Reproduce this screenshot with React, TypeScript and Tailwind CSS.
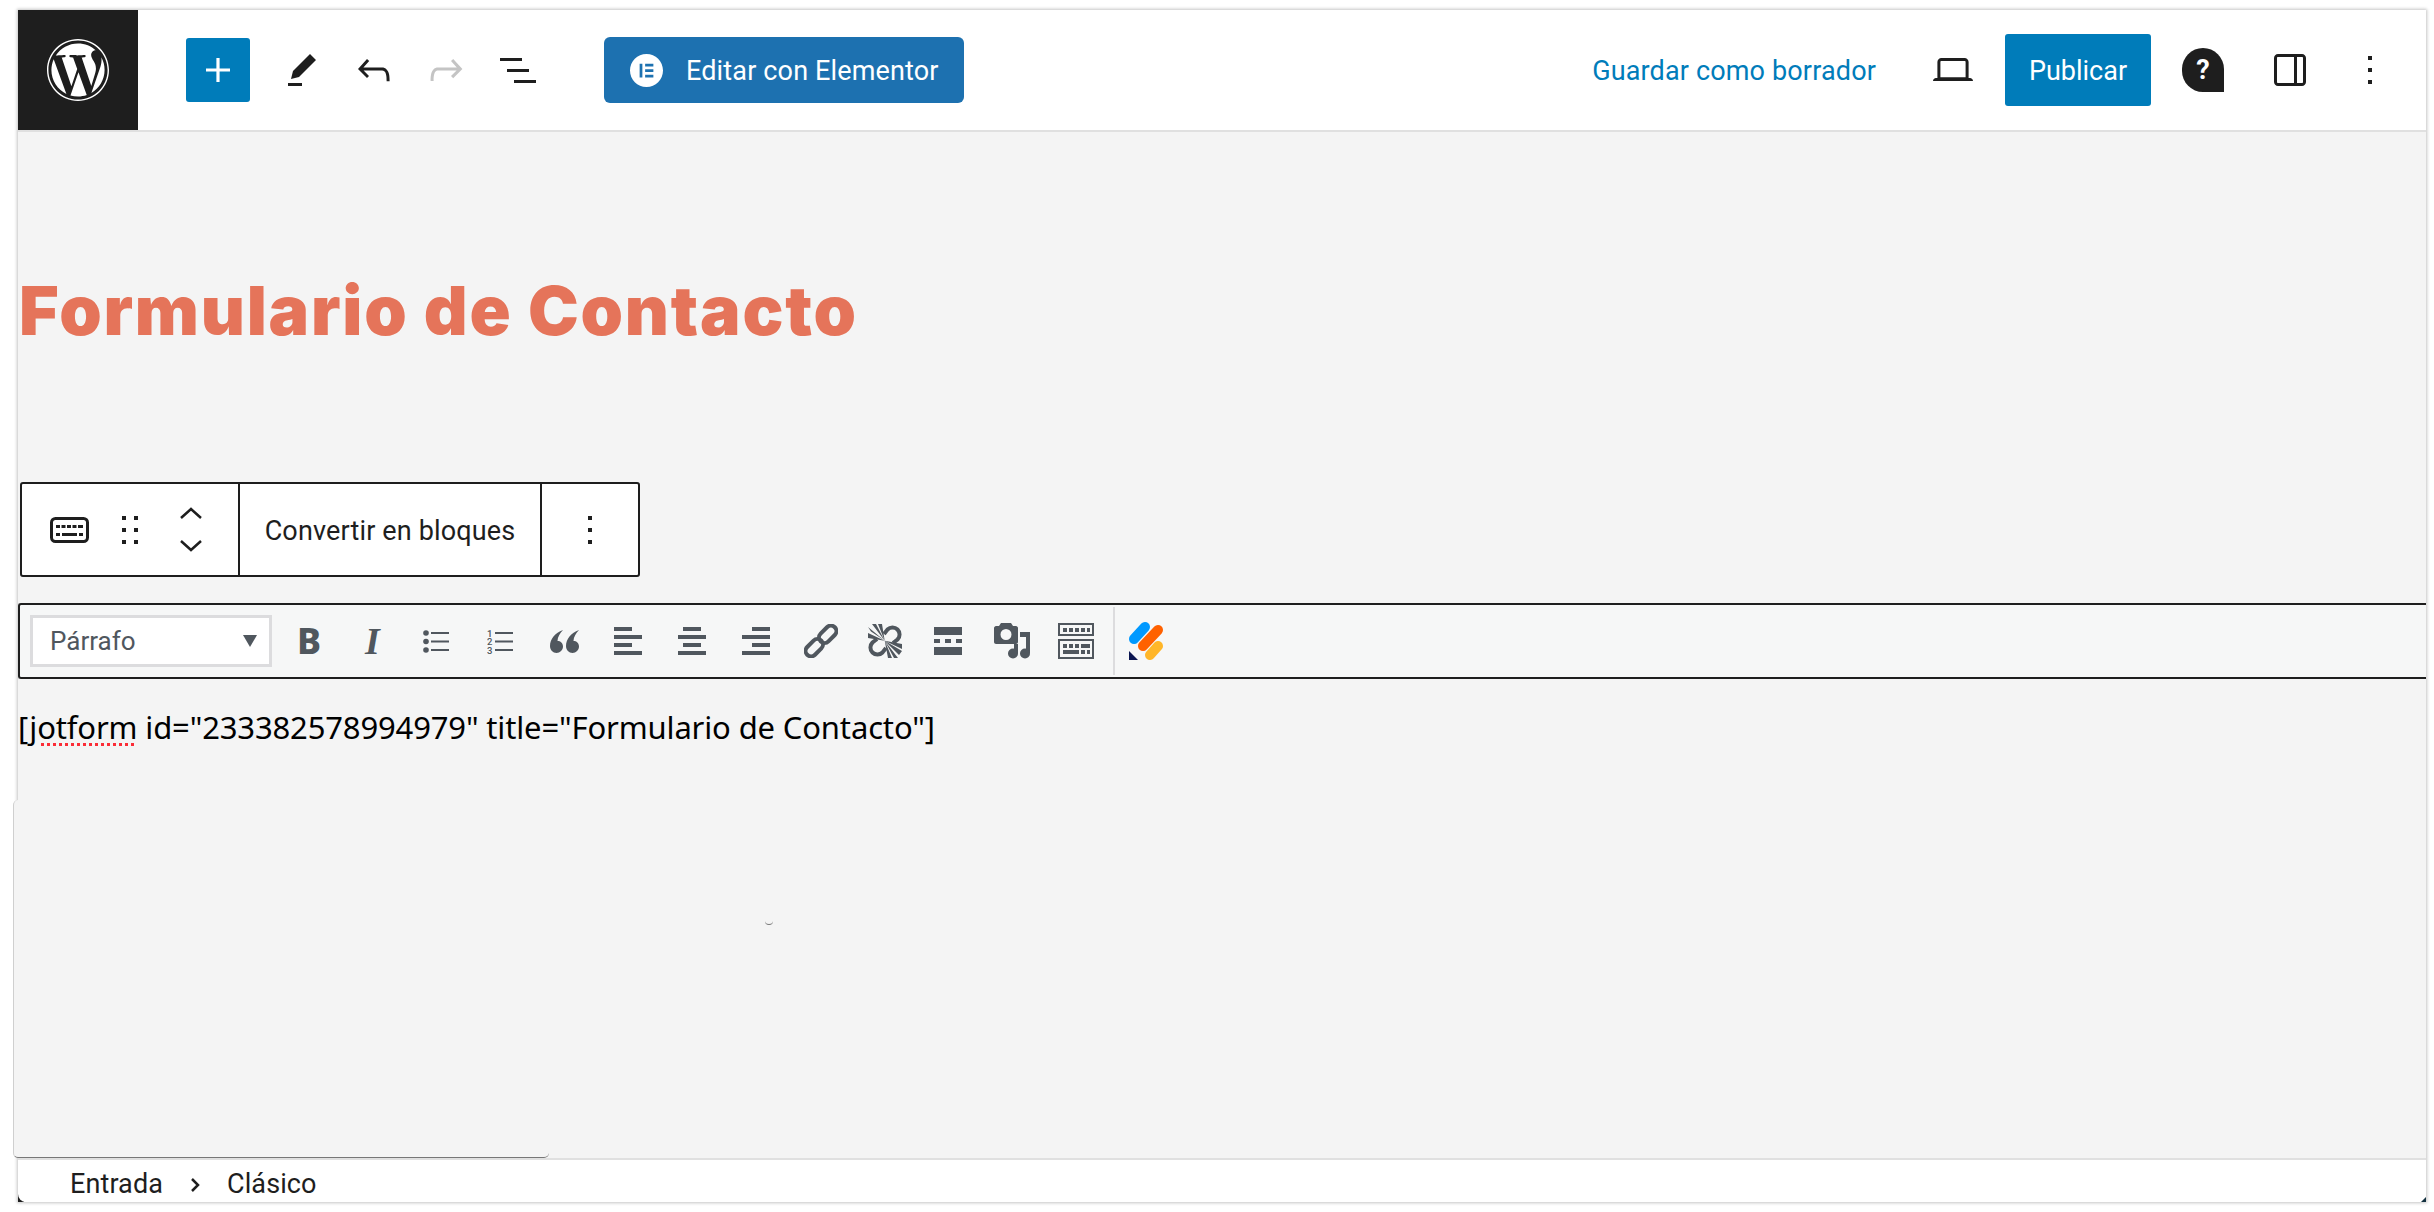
import { FaWordpress } from 'react-icons/fa'
import { SiElementor } from 'react-icons/si'

const Wp = ({ d, className = 'text-[#1e1e1e]' }: { d: string; className?: string }) => (
  <svg viewBox="0 0 24 24" className={`w-12 h-12 shrink-0 fill-current ${className}`}>
    <path d={d} />
  </svg>
)

const paths = {
  pencil: 'm19 7-3-3-8.5 8.5-1 4 4-1L19 7Zm-7 11.5H5V20h7v-1.5Z',
  undo: 'M18.3 11.7c-.6-.6-1.4-.9-2.3-.9H6.7l2.9-3.3-1.1-1-4.5 5L8.5 16l1-1-2.7-2.7H16c.5 0 .9.2 1.3.5 1 1 1 3.4 1 4.5v.3h1.5v-.2c0-1.5 0-4.3-1.5-5.7z',
  redo: 'M15.6 6.5l-1.1 1 2.9 3.3H8c-.9 0-1.7.3-2.3.9-1.4 1.5-1.4 4.2-1.4 5.6v.2h1.5v-.3c0-1.1 0-3.5 1-4.5.3-.3.7-.5 1.3-.5h9.2L14.5 15l1.1 1.1 4.6-4.6-4.6-5z',
  list: 'M3 6h11v1.5H3V6Zm3.5 5.5h11V13h-11v-1.5ZM21 17H10v1.5h11V17Z',
  laptop: 'M20.5 16h-.7V8c0-1.1-.9-2-2-2H6.2c-1.1 0-2 .9-2 2v8h-.7c-.8 0-1.5.7-1.5 1.5h20c0-.8-.7-1.5-1.5-1.5zM5.7 8c0-.3.2-.5.5-.5h11.6c.3 0 .5.2.5.5v7.6H5.7V8z',
  sidebar: 'M18 4H6c-1.1 0-2 .9-2 2v12c0 1.1.9 2 2 2h12c1.1 0 2-.9 2-2V6c0-1.1-.9-2-2-2zm-4 14.5H6c-.3 0-.5-.2-.5-.5V6c0-.3.2-.5.5-.5h8v13zm4.5-.5c0 .3-.2.5-.5.5h-2.5v-13H18c.3 0 .5.2.5.5v12z',
  more: 'M13 19h-2v-2h2v2zm0-6h-2v-2h2v2zm0-6h-2V5h2v2z',
  drag: 'M8 7h2V5H8v2zm0 6h2v-2H8v2zm0 6h2v-2H8v2zm6-14v2h2V5h-2zm0 8h2v-2h-2v2zm0 6h2v-2h-2v2z',
  plus: 'M18 11.2h-5.2V6h-1.6v5.2H6v1.6h5.2V18h1.6v-5.2H18z',
}

const Keyboard = () => (
  <svg viewBox="0 0 39 26" className="w-[39px] h-[26px] shrink-0 text-[#1e1e1e]">
    <rect x="1.5" y="1.5" width="36" height="23" rx="4" fill="none" stroke="currentColor" strokeWidth="3" />
    <path d="M6 8h4v3H6zM11.500 8h4v3h-4zM17 8h4v3h-4zM22.500 8h4v3h-4zM28 8h5v3h-5zM6 16h4v3H6zM12 16h15v3H12zM29 16h4v3h-4z" fill="currentColor" />
  </svg>
)

const Chevrons = () => (
  <div className="flex flex-col items-center gap-[21px] text-[#1e1e1e]">
    <svg viewBox="0 0 22 12" className="w-[22px] h-[12px] fill-none stroke-current stroke-[2.5]">
      <path d="M1 11 11 2l10 9" />
    </svg>
    <svg viewBox="0 0 22 12" className="w-[22px] h-[12px] fill-none stroke-current stroke-[2.5]">
      <path d="M1 1l10 9 10-9" />
    </svg>
  </div>
)

const Align = ({ rows }: { rows: [number, number][] }) => (
  <svg viewBox="0 0 28 28" className="w-7 h-7 shrink-0 fill-[#50575e]">
    {rows.map(([x, w], i) => (
      <rect key={i} x={x} y={i * 8} width={w} height="4" />
    ))}
  </svg>
)

const BulletList = () => (
  <svg viewBox="0 0 26 25" className="w-[26px] h-[25px] shrink-0 fill-[#50575e]">
    <circle cx="3" cy="4" r="2.8" />
    <circle cx="3" cy="12.5" r="2.8" />
    <circle cx="3" cy="21" r="2.8" />
    <path d="M8 3h18v2H8zM8 11.5h18v2H8zM8 20h18v2H8z" />
  </svg>
)

const NumberList = () => (
  <svg viewBox="0 0 26 25" className="w-[26px] h-[25px] shrink-0 fill-[#50575e]">
    <text x="0" y="7.5" fontSize="9.5" fontWeight="500" fontFamily="Roboto, sans-serif">1</text>
    <text x="0" y="16" fontSize="9.5" fontWeight="500" fontFamily="Roboto, sans-serif">2</text>
    <text x="0" y="24.5" fontSize="9.5" fontWeight="500" fontFamily="Roboto, sans-serif">3</text>
    <path d="M8 3h18v2H8zM8 11.5h18v2H8zM8 20h18v2H8z" />
  </svg>
)

const Quote = () => (
  <svg viewBox="0 0 30 23" className="w-[30px] h-[23px] shrink-0 fill-[#50575e]">
    <path d="M13 0C5 3 0 9 0 16c0 4 3 7 6.500 7s6.500-3 6.500-6.500S10.500 11 7.500 11C7.500 7 10 3 13 0z" />
    <path d="M29 0c-8 3-13 9-13 16 0 4 3 7 6.500 7s6.500-3 6.500-6.500-2.500-5.500-5.500-5.500c0-4 2.500-8 5.500-11z" />
  </svg>
)

const LinkIcon = () => (
  <svg viewBox="0 0 34 34" className="w-[34px] h-[34px] shrink-0 fill-none stroke-[#50575e] stroke-[4]">
    <rect x="-11" y="-5.5" width="20" height="11" rx="5.5" transform="translate(11 23) rotate(-45)" />
    <rect x="-9" y="-5.5" width="20" height="11" rx="5.5" transform="translate(23 11) rotate(-45)" />
  </svg>
)

const UnlinkIcon = () => (
  <svg viewBox="0 0 34 34" className="w-[34px] h-[34px] shrink-0">
    <path d="M16 10l3.500-4.500a7 7 0 0 1 10 10L25 19M18 24l-3.500 4.500a7 7 0 0 1-10-10L9 15" fill="none" stroke="#50575e" strokeWidth="4" />
    <path
      fill="#50575e"
      d="M16.700 16.700 0 9v5zM16.700 16.700 0 3l3 4.500zM16.700 16.700 4 0l4 0zM16.700 16.700 10 0h4zM16.700 16.700 34 20v5zM16.700 16.700 34 27l-3 4zM16.700 16.700 30 34h-4zM16.700 16.700 24 34h-4z"
    />
  </svg>
)

const MoreTag = () => (
  <svg viewBox="0 0 28 28" className="w-7 h-7 shrink-0 fill-[#50575e]">
    <path d="M0 0h28v8H0zM0 12h6v4H0zM11 12h6v4h-6zM22 12h6v4h-6zM0 20h28v8H0z" />
  </svg>
)

const MediaIcon = () => (
  <svg viewBox="0 0 36 36" className="w-9 h-9 shrink-0 fill-[#50575e]">
    <path fillRule="evenodd" d="M7 0h10l2 3h3c1 0 2 1 2 2v14c0 1-1 2-2 2H2c-1 0-2-1-2-2V5c0-1 1-2 2-2h3zm5 6a5.500 5.500 0 1 0 0 11 5.500 5.500 0 0 0 0-11z" />
    <path d="M26 9h10v21h-4V14h-6z" />
    <circle cx="31" cy="30.500" r="5" />
    <path d="M20 21h4v9.500h-4z" />
    <circle cx="19" cy="30.500" r="5" />
  </svg>
)

const KeyboardToggle = () => (
  <svg viewBox="0 0 36 36" className="w-9 h-9 shrink-0 fill-[#50575e]">
    <path fillRule="evenodd" d="M0 0h36v13H0zm2 2v9h32V2zM0 16h36v20H0zm2 2v16h32V18z" />
    <path d="M5 5h4v4H5zM11 5h4v4h-4zM17 5h4v4h-4zM23 5h4v4h-4zM29 5h3v4h-3zM5 21h4v4H5zM11 21h4v4h-4zM17 21h4v4h-4zM23 21h9v4h-9zM5 27h16v4H5zM23 27h4v4h-4zM29 27h3v4h-3z" />
  </svg>
)

const Jotform = () => (
  <svg viewBox="0 0 34 38" className="w-[34px] h-[38px] shrink-0 fill-none stroke-[10] [stroke-linecap:round]">
    <path d="M5 17 16 5" stroke="#0099ff" />
    <path d="M14 24 29 8" stroke="#ff6100" />
    <path d="M21 33l8-9" stroke="#ffb629" />
    <path d="M0 29v9h9z" fill="#0a1551" stroke="none" />
  </svg>
)

export default function App() {
  return (
    <div className="w-[2434px] h-[1212px] bg-white pt-[10px] pl-[18px] pr-[8px] pb-[10px] font-['Roboto',sans-serif] overflow-hidden">
      <div className="relative h-full flex flex-col bg-[#f4f4f4] shadow-[0_0_3px_1px_#c4c4c4]">
        <header className="h-[122px] shrink-0 flex items-center bg-white border-b-2 border-[#e0e0e0]">
          <div className="w-[120px] h-full bg-[#1e1e1e] flex items-center justify-center text-white">
            <FaWordpress className="w-[64px] h-[64px]" />
          </div>
          <button className="ml-[48px] w-16 h-16 rounded-[3px] bg-[#007cba] text-white flex items-center justify-center">
            <svg viewBox="0 0 24 24" className="w-12 h-12 fill-current"><path d={paths.plus} /></svg>
          </button>
          <div className="ml-[28px] flex items-center gap-[24px]">
            <Wp d={paths.pencil} />
            <Wp d={paths.undo} />
            <Wp d={paths.redo} className="text-[#c4c4c4]" />
            <Wp d={paths.list} />
          </div>
          <button className="ml-[62px] w-[360px] h-[66px] rounded-[6px] bg-[#1d71b0] text-white flex items-center pl-[26px] gap-[23px] text-[27px] tracking-[0.15px]">
            <SiElementor className="w-[33px] h-[33px]" />
            <span className="pt-[2px]">Editar con Elementor</span>
          </button>
          <span className="ml-auto pt-[2px] text-[27px] tracking-[0.15px] text-[#007cba]">Guardar como borrador</span>
          <div className="ml-[53px]"><Wp d={paths.laptop} /></div>
          <button className="ml-[28px] w-[146px] h-[72px] rounded-[3px] bg-[#007cba] text-white text-[27px] pt-[2px]">Publicar</button>
          <div className="ml-[31px] w-[42px] h-[44px] rounded-full rounded-br-[4px] bg-[#1e1e1e] text-white flex items-center justify-center text-[27px] font-bold">?</div>
          <div className="ml-[42px]"><Wp d={paths.sidebar} /></div>
          <div className="ml-[32px] mr-[32px]"><Wp d={paths.more} /></div>
        </header>

        <main className="flex-1 flex flex-col">
          <h1 className="mt-[142px] ml-[1px] h-[72px] leading-[72px] text-[68px] font-black tracking-[1.8px] text-[#e5745a] font-['Inter',sans-serif]">Formulario de Contacto</h1>

          <div className="mt-[136px] ml-[2px] w-[620px] h-[95px] flex items-stretch bg-white border-2 border-[#1e1e1e] rounded-[3px]">
            <div className="w-[216px] flex items-center pl-[28px]">
              <Keyboard />
              <div className="ml-[17px]"><Wp d={paths.drag} /></div>
              <div className="ml-[26px]"><Chevrons /></div>
            </div>
            <div className="w-[304px] pt-[4px] border-x-2 border-[#1e1e1e] flex items-center justify-center text-[27px] tracking-[0.15px] text-[#1e1e1e]">Convertir en bloques</div>
            <div className="flex-1 flex items-center justify-center"><Wp d={paths.more} /></div>
          </div>

          <div className="mt-[26px] h-[76px] flex items-center border-y-2 border-l-2 border-[#1e1e1e] rounded-l-[3px] bg-[#f6f7f7] pl-[10px]">
            <div className="w-[242px] h-[52px] flex items-center justify-between bg-white border-[3px] border-[#dcdcde] pl-[17px] pr-[12px] text-[26px] text-[#50575e]">
              Párrafo
              <span className="w-0 h-0 border-x-[7px] border-x-transparent border-t-[12px] border-t-[#50575e]" />
            </div>
            <span className="ml-[25px] w-[18px] text-[36px] leading-none font-extrabold text-[#50575e] font-['Noto_Sans',sans-serif]">B</span>
            <span className="ml-[50px] w-[20px] text-[38px] leading-none font-bold italic text-[#50575e] font-['Liberation_Serif',serif]">I</span>
            <div className="ml-[38px]"><BulletList /></div>
            <div className="ml-[38px]"><NumberList /></div>
            <div className="ml-[37px]"><Quote /></div>
            <div className="ml-[34px] flex items-center gap-[36px]">
              <Align rows={[[0, 18], [0, 28], [0, 18], [0, 28]]} />
              <Align rows={[[5, 18], [0, 28], [5, 18], [0, 28]]} />
              <Align rows={[[10, 18], [0, 28], [10, 18], [0, 28]]} />
            </div>
            <div className="ml-[34px]"><LinkIcon /></div>
            <div className="ml-[30px]"><UnlinkIcon /></div>
            <div className="ml-[32px]"><MoreTag /></div>
            <div className="ml-[32px]"><MediaIcon /></div>
            <div className="ml-[28px]"><KeyboardToggle /></div>
            <div className="ml-[19px] w-[2px] h-[68px] bg-[#dcdcde]" />
            <div className="ml-[14px]"><Jotform /></div>
          </div>

          <p className="mt-[28px] text-[31px] leading-[40px] text-black font-['Noto_Sans',sans-serif] tracking-[-0.15px]">
            [<span className="underline decoration-dotted decoration-red-500 underline-offset-4">jotform</span> id="233382578994979" title="Formulario de Contacto"]
          </p>
        </main>

        <span className="absolute left-0 bottom-0 w-[6px] h-[8px] bg-[#1e1e1e]" />
        <footer className="relative h-[44px] shrink-0 flex items-center bg-white border-t-2 border-[#e0e0e0] rounded-bl-[8px] pl-[52px] pt-[7px] text-[27px] tracking-[0.1px] text-[#1e1e1e]">
          <span>Entrada</span>
          <svg viewBox="0 0 10 14" className="ml-[27px] mr-[27px] w-[10px] h-[14px] fill-none stroke-current stroke-[2.5]"><path d="m2 1 6 6-6 6" /></svg>
          <span>Clásico</span>
        </footer>

        {/* floating panel left over the editor */}
        <div className="absolute left-[-5px] top-[790px] w-[536px] h-[358px] bg-[#f4f4f4] rounded-[5px] border-l border-[#cfcfcf] border-b border-b-[#777777]" />
        <span className="absolute left-[747px] top-[911px] w-[8px] h-[4px] border-b border-[#777777] rounded-b-full" />
        <span className="absolute right-0 bottom-0 w-0 h-0 border-l-[5px] border-l-transparent border-b-[5px] border-b-[#12303f]" />
      </div>
    </div>
  )
}
